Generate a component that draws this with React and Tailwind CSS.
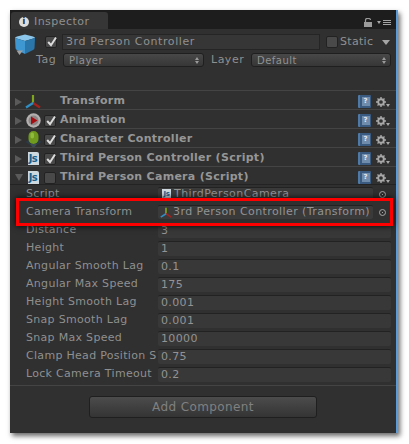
import React from 'react';

const font = { fontFamily: '"DejaVu Sans", sans-serif' };

const AxisIcon = ({ size = 16 }) => (
  <svg width={size} height={size} viewBox="0 0 16 16" className="shrink-0">
    <path d="M8 1V9" stroke="#7fa51e" strokeWidth="2.2" />
    <path d="M8 9L15 13.5" stroke="#a5211c" strokeWidth="2.2" />
    <path d="M8 9L1 13.5" stroke="#2f8fc4" strokeWidth="2.2" />
  </svg>
);

const PlayIcon = () => (
  <svg width="15" height="15" viewBox="0 0 15 15" className="shrink-0">
    <circle cx="7.5" cy="7.5" r="7.2" fill="#b5b0b0" />
    <circle cx="7.5" cy="7.5" r="5" fill="#8d8686" />
    <path d="M5 3.5L11.5 7.5L5 11.5Z" fill="#a50d12" />
  </svg>
);

const CapsuleIcon = () => (
  <svg width="17" height="18" viewBox="0 0 17 18" className="shrink-0">
    <path d="M0.5 11L4 8.5H13L16.5 11L13 13.5H4Z" fill="#2c3a45" />
    <path d="M5 13H12L8.5 17.5Z" fill="#3c4a55" />
    <rect x="3.5" y="0" width="10" height="13" rx="5" fill="#6f9a1e" />
    <rect x="5.5" y="1.5" width="3.5" height="6" rx="1.7" fill="#8fbc3a" />
  </svg>
);

const JsIcon = () => (
  <span className="shrink-0 flex items-center justify-center w-[11px] h-[13px] bg-[#cdd7de] text-[#155f8c] text-[10px] font-bold leading-none tracking-[-0.6px] rounded-tr-[2px]">
    Js
  </span>
);

const BookIcon = () => (
  <span className="shrink-0 flex items-center justify-center w-[13px] h-[13px] bg-[#3a5a80] border-l-2 border-[#4f7aa6] rounded-[1px]">
    <span className="flex items-center justify-center w-[8px] h-[9px] bg-[#6f8cad] text-[#e2e9ef] text-[7px] font-bold leading-none">?</span>
  </span>
);

const Gear = () => (
  <span className="shrink-0 flex items-end w-[14px]">
    <svg width="10" height="10" viewBox="0 0 10 10">
      <circle cx="5" cy="5" r="2.8" fill="none" stroke="#a8a8a8" strokeWidth="1.9" />
      <path d="M5 0V2M5 8V10M0 5H2M8 5H10M1.5 1.5L3 3M7 7L8.5 8.5M8.5 1.5L7 3M3 7L1.5 8.5" stroke="#a8a8a8" strokeWidth="1.4" />
    </svg>
    <svg width="4" height="3" viewBox="0 0 4 3"><path d="M0 0H4L2 3Z" fill="#a8a8a8" /></svg>
  </span>
);

const Check = ({ on }) => (
  <span className="block shrink-0 relative w-[12px] h-[12px] rounded-[2px] bg-[#494949] border border-[#222222]">
    {on && (
      <svg width="12" height="12" viewBox="0 0 12 12" className="absolute -top-[1px] -left-[0.5px]">
        <path d="M2.2 6L5 9.2L10 1.5" fill="none" stroke="#dcdcdc" strokeWidth="2" />
      </svg>
    )}
  </span>
);

const Dropdown = ({ text, className }) => (
  <div className={`flex items-center justify-between h-[14px] rounded-[3px] border border-[#1f1f1f] bg-gradient-to-b from-[#484848] to-[#363636] pl-[5px] pr-[4px] text-[10px] tracking-[0.5px] text-[#929292] ${className}`}>
    <span>{text}</span>
    <span className="flex flex-col gap-[1px]">
      <span className="w-0 h-0 border-x-[2px] border-x-transparent border-b-[3px] border-b-[#9a9a9a]" />
      <span className="w-0 h-0 border-x-[2px] border-x-transparent border-t-[3px] border-t-[#9a9a9a]" />
    </span>
  </div>
);

const components = [
  { name: 'Transform', icon: <AxisIcon />, check: null },
  { name: 'Animation', icon: <PlayIcon />, check: true },
  { name: 'Character Controller', icon: <CapsuleIcon />, check: true },
  { name: 'Third Person Controller (Script)', icon: <JsIcon />, check: true },
  { name: 'Third Person Camera (Script)', icon: <JsIcon />, check: false, open: true },
];

const ComponentRow = ({ name, icon, check, open }) => (
  <div className="flex items-center h-[19px] border-t border-[#444444] pt-[3px] pl-[5px] pr-[6px]">
    {open ? (
      <span className="w-0 h-0 border-x-[4px] border-x-transparent border-t-[7px] border-t-[#5a5a5a] mr-[1px]" />
    ) : (
      <span className="w-0 h-0 border-y-[4px] border-y-transparent border-l-[7px] border-l-[#5a5a5a] mr-[2px]" />
    )}
    <span className="flex justify-center w-[18px] mr-[2px]">{icon}</span>
    <span className="flex w-[16px]">{check !== null && <Check on={check} />}</span>
    <span className="flex-1 whitespace-nowrap font-bold text-[11px] tracking-[0.28px] text-[#969696]">{name}</span>
    <span className="mr-[5px]"><BookIcon /></span>
    <Gear />
  </div>
);

const fields = [
  ['Distance', '3'],
  ['Height', '1'],
  ['Angular Smooth Lag', '0.1'],
  ['Angular Max Speed', '175'],
  ['Height Smooth Lag', '0.001'],
  ['Snap Smooth Lag', '0.001'],
  ['Snap Max Speed', '10000'],
  ['Clamp Head Position S', '0.75'],
  ['Lock Camera Timeout', '0.2'],
];

const Label = ({ children }) => (
  <span className="w-[132px] shrink-0 whitespace-nowrap text-[11px] tracking-[0.3px] text-[#8f8f8f]">{children}</span>
);

const RefField = ({ icon, text, light }) => (
  <div className="flex items-center h-[18px]">
    <Label>{light}</Label>
    <div className="flex items-center gap-[1px] w-[215px] h-[14px] rounded-[2px] bg-[#3a3a3a] border-t border-[#222222] pl-[2px] text-[11px] tracking-[0.42px] text-[#939393] whitespace-nowrap">
      {icon}
      <span>{text}</span>
    </div>
    <span className="ml-[6px] flex items-center justify-center w-[7px] h-[7px] rounded-full border border-[#a5a5a5]">
      <span className="w-[1px] h-[1px] bg-[#a5a5a5]" />
    </span>
  </div>
);

const NumberField = ({ label, value }) => (
  <div className="flex items-center h-[18px]">
    <Label>{label}</Label>
    <div className="w-[233px] h-[15px] rounded-[2px] bg-[#383838] border-t border-[#222222] pl-[3px] text-[11px] leading-[14px] tracking-[0.35px] text-[#939393]">{value}</div>
  </div>
);

export default function App() {
  return (
    <div style={font} className="w-[409px] h-[444px] bg-white pl-[10px] pt-[10px] overflow-hidden">
      <div className="relative flex flex-col w-[388px] h-[423px] bg-[#303030] border-r-2 border-[#5a9bd8] shadow-[2px_3px_5px_rgba(0,0,0,0.6)]">
        <div className="flex items-end justify-between h-[19px] bg-[#1d1d1d] pl-[1px] pr-[5px]">
          <div className="flex items-center gap-[5px] w-[97px] h-[17px] pt-[3px] rounded-t-[3px] bg-[#363636] pl-[8px] text-[11px] tracking-[0.45px] text-[#8f8f8f]">
            <span className="flex items-center justify-center w-[10px] h-[10px] rounded-full bg-[#dddddd] text-[#222222] text-[8px] font-bold leading-none">i</span>
            Inspector
          </div>
          <div className="flex items-center gap-[5px] pb-[2px]">
            <svg width="8" height="9" viewBox="0 0 8 9">
              <path d="M1.5 4V2a2.5 1.7 0 0 1 5 0" fill="none" stroke="#9a9a9a" strokeWidth="1.2" />
              <rect x="0" y="4" width="8" height="5" fill="#9a9a9a" />
            </svg>
            <svg width="14" height="6" viewBox="0 0 14 6">
              <path d="M0 1H4L2 4Z" fill="#a5a5a5" />
              <path d="M6 0.5H14M6 2.5H14M6 4.5H14" stroke="#a5a5a5" />
            </svg>
          </div>
        </div>

        <div className="flex items-start h-[61px] pl-[4px] pr-[5px] pt-[5px]">
          <svg width="22" height="22" viewBox="0 0 22 22" className="shrink-0">
            <path d="M1 4Q1 3 3 2.5L11 0.5L19 2.5Q21 3 21 4L11 7Z" fill="#8cc6ea" />
            <path d="M1 4L11 7V20L3 16Q1.500 15.500 1.500 14Z" fill="#3f97d2" />
            <path d="M21 4L11 7V20L19 16Q20.500 15.500 20.500 14Z" fill="#2a76aa" />
            <path d="M2.500 16.500H9L5.500 21Z" fill="#a0a0a0" />
          </svg>
          <div className="flex flex-col flex-1 min-w-0">
            <div className="flex items-center h-[16px]">
              <span className="ml-[9px]"><Check on /></span>
              <div className="ml-[5px] w-[258px] h-[16px] bg-[#363636] border border-[#252525] pl-[3px] text-[11px] leading-[14px] tracking-[0.6px] text-[#909090]">3rd Person Controller</div>
              <span className="ml-[6px]"><Check /></span>
              <span className="ml-[2px] text-[11px] tracking-[0.3px] text-[#909090]">Static</span>
              <span className="ml-[9px] w-0 h-0 border-x-[4px] border-x-transparent border-t-[5px] border-t-[#a5a5a5]" />
            </div>
            <div className="flex items-center h-[20px] text-[11px] tracking-[0.5px] text-[#8f8f8f]">
              <span className="w-[27px]">Tag</span>
              <Dropdown text="Player" className="w-[141px]" />
              <span className="ml-[7px] w-[40px]">Layer</span>
              <Dropdown text="Default" className="flex-1" />
            </div>
          </div>
        </div>

        {components.map((c) => (
          <ComponentRow key={c.name} {...c} />
        ))}

        <div className="border-t border-[#232323] pl-[16px] pr-[5px] -mt-[1px]">
          <RefField
            light="Script"
            text="ThirdPersonCamera"
            icon={<span className="flex justify-center ml-[2px] mr-[2px] w-[9px] h-[11px] bg-[#cdd7de] text-[#155f8c] text-[7px] font-bold leading-[11px] tracking-[-0.4px]">Js</span>}
          />
          <RefField light="Camera Transform" text="3rd Person Controller (Transform)" icon={<AxisIcon size={12} />} />
          {fields.map(([label, value]) => (
            <NumberField key={label} label={label} value={value} />
          ))}
        </div>

        <div className="mt-[2px] border-t border-[#444444] flex justify-center pt-[10px]">
          <button className="w-[228px] h-[22px] rounded-[3px] border border-[#1f1f1f] bg-gradient-to-b from-[#4c4c4c] to-[#343434] text-[12px] tracking-[0.4px] text-[#808080]">
            Add Component
          </button>
        </div>

        <div className="absolute left-[6px] top-[188px] w-[377px] h-[28px] border-[3px] border-[#ff0000] shadow-[0_0_6px_rgba(0,0,0,0.9)]" />
      </div>
    </div>
  );
}
